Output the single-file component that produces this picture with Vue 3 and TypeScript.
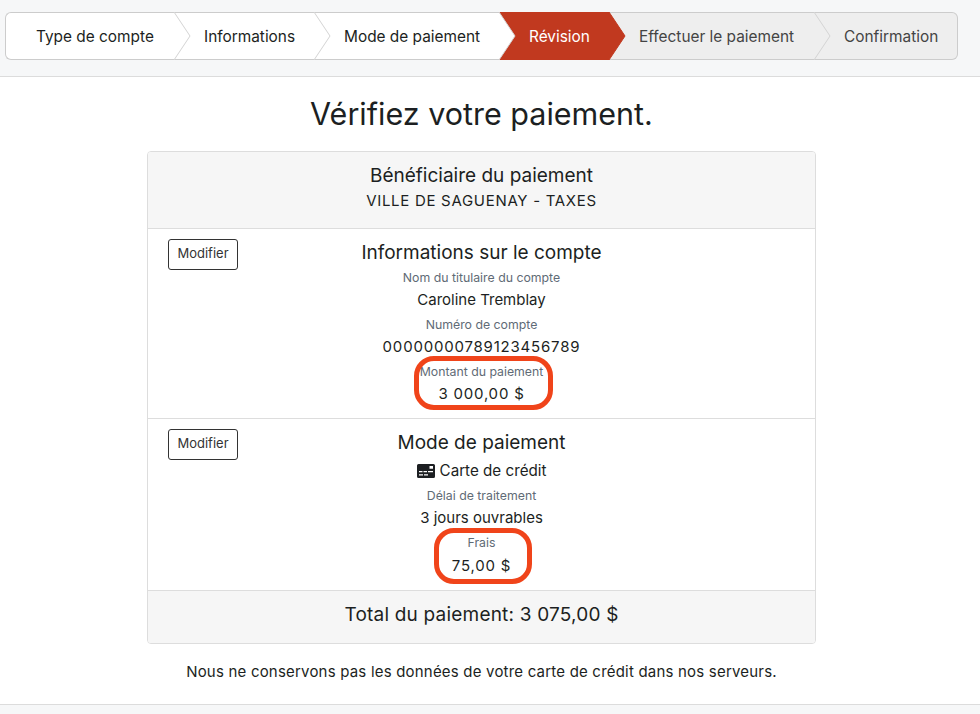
<template>
  <div class="page">
    <div class="topbar">
      <ol class="stepper">
        <li
          v-for="(step, i) in steps"
          :key="step.label"
          class="step"
          :class="step.state"
          :style="{ width: step.width + 'px', zIndex: steps.length - i }"
        >
          <span>{{ step.label }}</span>
          <svg v-if="i < steps.length - 1" class="chevron" width="17" height="48" viewBox="0 0 17 48">
            <path class="chevron-fill" d="M0 0L16 24L0 48Z" />
            <path class="chevron-line" d="M0 0L16 24L0 48" />
          </svg>
        </li>
      </ol>
    </div>

    <main class="content">
      <h1 class="title">Vérifiez votre paiement.</h1>

      <section class="card">
        <header class="card-head">
          <h2 class="heading">Bénéficiaire du paiement</h2>
          <div class="payee">VILLE DE SAGUENAY - TAXES</div>
        </header>

        <div class="row">
          <button class="edit" type="button">Modifier</button>
          <div class="details">
            <h3 class="heading">Informations sur le compte</h3>
            <div class="field">
              <div class="label">Nom du titulaire du compte</div>
              <div class="value">Caroline Tremblay</div>
            </div>
            <div class="field">
              <div class="label">Numéro de compte</div>
              <div class="value num">00000000789123456789</div>
            </div>
            <div class="field highlighted amount">
              <div class="label">Montant du paiement</div>
              <div class="value num">3 000,00 $</div>
            </div>
          </div>
        </div>

        <div class="row">
          <button class="edit" type="button">Modifier</button>
          <div class="details">
            <h3 class="heading">Mode de paiement</h3>
            <div class="method">
              <svg class="card-icon" width="18" height="14" viewBox="0 0 18 14">
                <path
                  fill-rule="evenodd"
                  d="M1.5 0H16.5A1.5 1.5 0 0 1 18 1.5V12.5A1.5 1.5 0 0 1 16.5 14H1.5A1.5 1.5 0 0 1 0 12.5V1.5A1.5 1.5 0 0 1 1.5 0ZM12.5 2V4.8H16V2ZM2 7V8.3H5.5V7ZM6.5 7V8.3H10V7ZM11 7V8.3H16V7ZM2 10.3V11.5H6V10.3ZM7 10.3V11.5H11V10.3Z"
                />
              </svg>
              <span>Carte de crédit</span>
            </div>
            <div class="field">
              <div class="label">Délai de traitement</div>
              <div class="value">3 jours ouvrables</div>
            </div>
            <div class="field highlighted fee">
              <div class="label">Frais</div>
              <div class="value num">75,00 $</div>
            </div>
          </div>
        </div>

        <footer class="card-foot">Total du paiement: 3 075,00 $</footer>
      </section>

      <p class="note">Nous ne conservons pas les données de votre carte de crédit dans nos serveurs.</p>
    </main>

    <div class="bottom"></div>
  </div>
</template>

<script setup lang="ts">
interface Step {
  label: string
  width: number
  state: 'done' | 'active' | 'todo'
}

const steps: Step[] = [
  { label: 'Type de compte', width: 169, state: 'done' },
  { label: 'Informations', width: 140, state: 'done' },
  { label: 'Mode de paiement', width: 185, state: 'done' },
  { label: 'Révision', width: 110, state: 'active' },
  { label: 'Effectuer le paiement', width: 205, state: 'todo' },
  { label: 'Confirmation', width: 144, state: 'todo' }
]
</script>

<style>
html,
body {
  margin: 0;
  background: #fff;
}
</style>

<style scoped>
.page {
  height: 714px;
  overflow: hidden;
  display: flex;
  flex-direction: column;
  font-family: Inter, "Noto Sans", sans-serif;
  color: #1c1f22;
}

.topbar {
  flex: none;
  height: 77px;
  box-sizing: border-box;
  padding: 12px 0 0 5px;
  background: #f6f7f8;
  border-bottom: 1px solid #dcdcdc;
}

.stepper {
  display: flex;
  width: 953px;
  height: 48px;
  margin: 0;
  padding: 0;
  list-style: none;
}

.step {
  position: relative;
  box-sizing: border-box;
  display: flex;
  align-items: center;
  height: 48px;
  padding-left: 30px;
  font-size: 15.4px;
  white-space: nowrap;
  border-top: 1px solid #ccc;
  border-bottom: 1px solid #ccc;
}

.step:first-child {
  border-left: 1px solid #ccc;
  border-radius: 6px 0 0 6px;
}

.step:last-child {
  border-right: 1px solid #ccc;
  border-radius: 0 6px 6px 0;
}

.step.done {
  background: #fff;
  color: #1c1f22;
}

.step.active {
  background: #c1391f;
  border-color: #c1391f;
  color: #fff;
}

.step.todo {
  background: #eee;
  color: #444;
}

.chevron {
  position: absolute;
  top: -1px;
  left: 100%;
  overflow: visible;
}

.done .chevron-fill {
  fill: #fff;
}

.active .chevron-fill {
  fill: #c1391f;
}

.todo .chevron-fill {
  fill: #eee;
}

.chevron-line {
  fill: none;
  stroke: #d4d4d4;
  stroke-width: 1;
}

.active .chevron-line {
  stroke: #c1391f;
}

.content {
  flex: 1;
  display: flex;
  flex-direction: column;
  align-items: center;
  padding-right: 17px;
}

.title {
  margin: 17px 0;
  font-size: 30.5px;
  line-height: 40px;
  font-weight: 400;
}

.card {
  box-sizing: border-box;
  width: 669px;
  border: 1px solid #ddd;
  border-radius: 4px;
  overflow: hidden;
}

.card-head {
  height: 77px;
  box-sizing: border-box;
  padding-top: 11px;
  text-align: center;
  background: #f6f6f6;
  border-bottom: 1px solid #ddd;
}

.heading {
  margin: 0;
  font-size: 19px;
  line-height: 25px;
  font-weight: 400;
}

.payee {
  margin-top: 1px;
  font-size: 15px;
  line-height: 24px;
  letter-spacing: 0.7px;
}

.row {
  display: grid;
  grid-template-columns: 1fr auto 1fr;
  padding: 11px 20px 12px;
  border-bottom: 1px solid #ddd;
}

.edit {
  justify-self: start;
  width: 70px;
  height: 31px;
  margin-top: -1px;
  padding: 0 0 4px;
  font: inherit;
  font-size: 13px;
  color: #333;
  background: #fff;
  border: 1px solid #333;
  border-radius: 3px;
}

.details {
  text-align: center;
}

.field {
  margin-top: 3px;
}

.label {
  font-size: 12.3px;
  line-height: 20px;
  color: #5f6b76;
}

.value {
  font-size: 15px;
  line-height: 24px;
}

.num {
  letter-spacing: 0.8px;
}

.highlighted {
  position: relative;
}

.highlighted::after {
  content: "";
  position: absolute;
  box-sizing: border-box;
  left: 50%;
  border: 5px solid #f0441a;
  border-radius: 20px;
}

.amount::after {
  top: -6px;
  width: 139px;
  height: 54px;
  margin-left: -68px;
}

.fee::after {
  top: -5px;
  width: 98px;
  height: 56px;
  margin-left: -48px;
}

.fee .value {
  margin-top: 1px;
}

.method {
  display: flex;
  align-items: center;
  justify-content: center;
  gap: 5px;
  margin-top: 4px;
  font-size: 15.2px;
  line-height: 24px;
}

.card-icon {
  fill: #1c1f22;
}

.card-foot {
  height: 52px;
  line-height: 48px;
  text-align: center;
  font-size: 19px;
  letter-spacing: 0.2px;
  background: #f6f6f6;
}

.note {
  margin: 18px 0 0;
  font-size: 15px;
  line-height: 20px;
  letter-spacing: 0.2px;
  color: #1c1f22;
}

.bottom {
  flex: none;
  height: 9px;
  background: #f6f7f8;
  border-top: 1px solid #dcdcdc;
}
</style>
